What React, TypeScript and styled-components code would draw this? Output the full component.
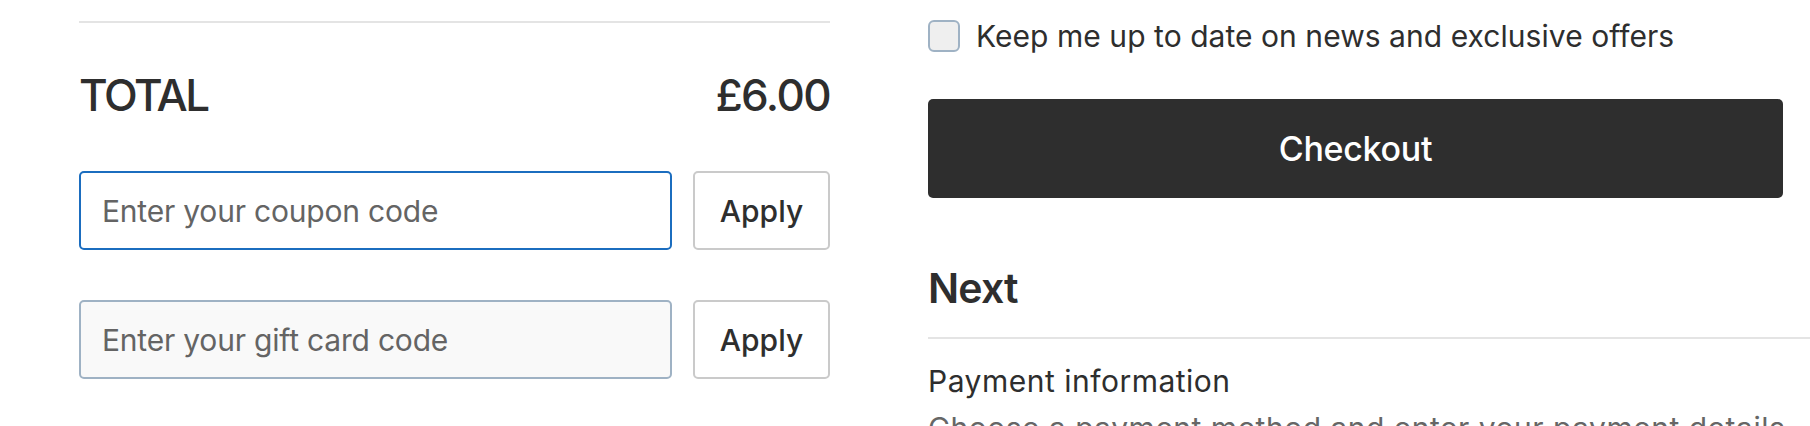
import React from "react";
import styled, { createGlobalStyle } from "styled-components";

const GlobalStyle = createGlobalStyle`
  html, body {
    margin: 0;
    padding: 0;
    background: #ffffff;
    font-family: Inter, "Noto Sans", Roboto, sans-serif;
    color: #2e2e2e;
    overflow: hidden;
  }
  * { box-sizing: border-box; }
`;

const Page = styled.div`
  display: flex;
  align-items: flex-start;
  width: 1810px;
  height: 426px;
  overflow: hidden;
  padding-left: 79px;
  gap: 98px;
`;

const Summary = styled.section`
  width: 751px;
  flex: none;
  display: flex;
  flex-direction: column;
  padding-top: 21px;
`;

const Divider = styled.hr`
  margin: 0;
  border: none;
  height: 2px;
  background: #e4e4e4;
  flex: none;
`;

const TotalRow = styled.div`
  display: flex;
  justify-content: space-between;
  align-items: baseline;
  margin-top: 45px;
  font-size: 44px;
  line-height: 54px;
  font-weight: 500;
  letter-spacing: -2.4px;
`;

const Amount = styled.span`
  letter-spacing: -1.6px;
`;

const CodeRow = styled.div<{ $gap: number }>`
  display: flex;
  gap: 21px;
  height: 79px;
  margin-top: ${(p) => p.$gap}px;
`;

const CodeInput = styled.input<{ $focused?: boolean }>`
  flex: 1;
  min-width: 0;
  height: 100%;
  border-radius: 5px;
  border: 2px solid ${(p) => (p.$focused ? "#1b6dbf" : "#9fb2c4")};
  background: ${(p) => (p.$focused ? "#ffffff" : "#f9f9f9")};
  padding: 0 0 0 21px;
  font-family: inherit;
  font-size: 30px;
  letter-spacing: -0.2px;
  color: #2e2e2e;
  outline: none;
  &::placeholder {
    color: #646464;
  }
`;

const ApplyButton = styled.button`
  width: 137px;
  flex: none;
  height: 100%;
  border: 2px solid #cacaca;
  border-radius: 5px;
  background: #ffffff;
  font-family: inherit;
  font-size: 30px;
  font-weight: 500;
  color: #2e2e2e;
  padding: 0;
  cursor: pointer;
`;

const Steps = styled.section`
  flex: 1;
  min-width: 0;
  display: flex;
  flex-direction: column;
  padding-top: 20px;
`;

const OptIn = styled.label`
  display: flex;
  align-items: center;
  gap: 16px;
  height: 32px;
  font-size: 30px;
  line-height: 32px;
  letter-spacing: 0.05px;
`;

const Box = styled.input`
  appearance: none;
  margin: 0;
  width: 32px;
  height: 32px;
  flex: none;
  border: 2px solid #9fb2c4;
  border-radius: 6px;
  background: #efefef;
`;

const CheckoutButton = styled.button`
  margin-top: 47px;
  margin-right: 27px;
  height: 99px;
  border: none;
  border-radius: 5px;
  background: #2e2e2e;
  color: #ffffff;
  font-family: inherit;
  font-size: 34px;
  font-weight: 500;
  letter-spacing: -0.3px;
  cursor: pointer;
`;

const NextHeading = styled.h2`
  margin: 65px 0 0;
  font-size: 41px;
  line-height: 50px;
  font-weight: 600;
  letter-spacing: -0.8px;
`;

const StepDivider = styled(Divider)`
  margin-top: 24px;
`;

const StepTitle = styled.div`
  margin-top: 24px;
  font-size: 30px;
  line-height: 36px;
  letter-spacing: 0.5px;
`;

const StepText = styled.div`
  margin-top: 11px;
  font-size: 30px;
  line-height: 36px;
  letter-spacing: 0.5px;
  color: #666666;
  white-space: nowrap;
`;

export default function App() {
  return (
    <>
      <GlobalStyle />
      <Page>
        <Summary>
          <Divider />
          <TotalRow>
            <span>TOTAL</span>
            <Amount>£6.00</Amount>
          </TotalRow>
          <CodeRow $gap={49}>
            <CodeInput $focused placeholder="Enter your coupon code" />
            <ApplyButton>Apply</ApplyButton>
          </CodeRow>
          <CodeRow $gap={50}>
            <CodeInput placeholder="Enter your gift card code" />
            <ApplyButton>Apply</ApplyButton>
          </CodeRow>
        </Summary>
        <Steps>
          <OptIn>
            <Box type="checkbox" />
            Keep me up to date on news and exclusive offers
          </OptIn>
          <CheckoutButton>Checkout</CheckoutButton>
          <NextHeading>Next</NextHeading>
          <StepDivider />
          <StepTitle>Payment information</StepTitle>
          <StepText>Choose a payment method and enter your payment details</StepText>
        </Steps>
      </Page>
    </>
  );
}
